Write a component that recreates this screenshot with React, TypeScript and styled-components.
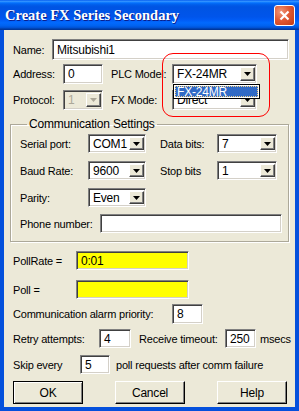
import { type ReactElement, type ReactNode } from 'react';
import styled, { createGlobalStyle } from 'styled-components';

const GlobalStyle = createGlobalStyle`
  html, body {
    margin: 0;
    padding: 0;
    background: #ffffff;
  }
  body {
    font-family: 'Liberation Sans', Arial, sans-serif;
    font-size: 11px;
    letter-spacing: -0.2px;
    color: #000;
  }
`;

const Window = styled.div`
  position: relative;
  width: 299px;
  height: 411px;
  display: flex;
  flex-direction: column;
  background: #0450dc;
  box-sizing: border-box;
  overflow: hidden;
`;

const TitleBar = styled.div`
  height: 30px;
  flex: none;
  display: flex;
  align-items: center;
  justify-content: space-between;
  padding: 0 4px 0 5px;
  box-sizing: border-box;
  background: linear-gradient(
    to bottom,
    #0058ee 0%,
    #3593ff 4%,
    #288eff 6%,
    #127dff 8%,
    #036ffc 10%,
    #0262ee 14%,
    #0057e5 20%,
    #0054e3 24%,
    #0055eb 56%,
    #005bf5 66%,
    #026afe 76%,
    #0062ef 86%,
    #0052d6 92%,
    #0040ab 96%,
    #003092 100%
  );
`;

const Title = styled.span`
  font-family: 'Liberation Serif', 'Times New Roman', serif;
  font-weight: bold;
  font-size: 14.5px;
  letter-spacing: 0;
  color: #fff;
  text-shadow: 1px 1px 0 #0a1e8c;
`;

const CloseButton = styled.div`
  width: 21px;
  height: 21px;
  box-sizing: border-box;
  border: 1px solid #fff;
  border-radius: 3px;
  background: radial-gradient(circle at 30% 30%, #f0977a 0%, #e05a35 45%, #c13a12 100%);
  display: flex;
  align-items: center;
  justify-content: center;
`;

const Body = styled.div`
  flex: 1;
  margin: 0 4px 4px 4px;
  background: #ece9d8;
  padding: 9px 6px 0 6px;
  display: flex;
  flex-direction: column;
`;

const Row = styled.div<{ $h: number; $mt?: number }>`
  display: flex;
  align-items: center;
  height: ${(p) => p.$h}px;
  margin-top: ${(p) => p.$mt ?? 0}px;
  padding-left: 3px;
  flex: none;
`;

const GroupRow = styled(Row)`
  padding-left: 0;
`;

const Label = styled.span<{ $w?: number; $ml?: number }>`
  width: ${(p) => (p.$w ? `${p.$w}px` : 'auto')};
  margin-left: ${(p) => p.$ml ?? 0}px;
  flex: none;
  white-space: nowrap;
`;

const Field = styled.div<{ $w?: number; $bg?: string }>`
  width: ${(p) => (p.$w ? `${p.$w}px` : 'auto')};
  flex: ${(p) => (p.$w ? 'none' : '1')};
  height: 100%;
  box-sizing: border-box;
  background: ${(p) => p.$bg ?? '#fff'};
  border-top: 1px solid #808080;
  border-left: 1px solid #808080;
  border-right: 1px solid #fff;
  border-bottom: 1px solid #fff;
  box-shadow: inset 1px 1px 0 #404040, inset -1px -1px 0 #d4d0c8;
  display: flex;
  align-items: center;
  padding-left: 4px;
  font-size: 12px;
`;

const ComboBox = styled.div<{ $w: number; $disabled?: boolean }>`
  position: relative;
  width: ${(p) => p.$w}px;
  height: 100%;
  flex: none;
  box-sizing: border-box;
  background: ${(p) => (p.$disabled ? '#ece9d8' : '#fff')};
  border-top: 1px solid #808080;
  border-left: 1px solid #808080;
  border-right: 1px solid #fff;
  border-bottom: 1px solid #fff;
  box-shadow: inset 1px 1px 0 #404040, inset -1px -1px 0 #d4d0c8;
  display: flex;
  align-items: center;
  padding: 2px 1px 2px 1px;
  color: ${(p) => (p.$disabled ? '#aca899' : '#000')};
  font-size: 12px;
`;

const ComboText = styled.span`
  flex: 1;
  min-width: 0;
  padding-left: 3px;
  white-space: nowrap;
`;

const DropButton = styled.div`
  width: 15px;
  height: 100%;
  flex: none;
  box-sizing: border-box;
  background: #ece9d8;
  border-top: 1px solid #fff;
  border-left: 1px solid #fff;
  border-right: 1px solid #404040;
  border-bottom: 1px solid #404040;
  box-shadow: inset -1px -1px 0 #808080;
  display: flex;
  align-items: center;
  justify-content: center;
`;

const DropList = styled.div`
  position: absolute;
  left: 0;
  top: calc(100% + 1px);
  width: 87px;
  height: 15px;
  box-sizing: border-box;
  border: 1px solid #000;
  background: #fff;
  padding: 1px;
  z-index: 2;
`;

const DropItem = styled.div`
  height: 100%;
  box-sizing: border-box;
  background: #316ac5;
  color: #fff;
  outline: 1px dotted #f5d080;
  outline-offset: -1px;
  display: flex;
  align-items: center;
  padding-left: 2px;
  font-size: 12px;
`;

const Highlight = styled.div`
  position: absolute;
  left: 162px;
  top: 53px;
  width: 108px;
  height: 64px;
  box-sizing: border-box;
  border: 1px solid #ff0000;
  border-radius: 11px;
  pointer-events: none;
  z-index: 3;
`;

const Group = styled.fieldset`
  margin: 7px 0 0 0;
  padding: 0 0 8px 9px;
  min-width: 0;
  border: 1px solid #aca899;
  box-shadow: inset 1px 1px 0 #fff, 1px 1px 0 #fff;
  flex: none;
`;

const Legend = styled.legend`
  margin-left: 7px;
  padding: 0 2px;
  line-height: 14px;
  font-size: 12px;
`;

const ButtonRow = styled.div`
  display: flex;
  gap: 32px;
  padding-left: 3px;
  margin-top: 7px;
  height: 23px;
`;

const Button = styled.div<{ $default?: boolean }>`
  width: 70px;
  height: 23px;
  box-sizing: border-box;
  background: #ece9d8;
  display: flex;
  align-items: center;
  justify-content: center;
  font-size: 12px;
  border-top: 1px solid ${(p) => (p.$default ? '#000' : '#fff')};
  border-left: 1px solid ${(p) => (p.$default ? '#000' : '#fff')};
  border-right: 1px solid #000;
  border-bottom: 1px solid #000;
  box-shadow: ${(p) =>
    p.$default
      ? 'inset 1px 1px 0 #fff, inset -1px -1px 0 #808080'
      : 'inset -1px -1px 0 #808080'};
`;

function Arrow({ color = '#000' }: { color?: string }): ReactElement {
  return (
    <svg width='7' height='4' viewBox='0 0 7 4'>
      <path d='M0 0H7L3.5 4Z' fill={color} />
    </svg>
  );
}

function Combo({
  value,
  width,
  disabled,
  children,
}: {
  value: string;
  width: number;
  disabled?: boolean;
  children?: ReactNode;
}): ReactElement {
  return (
    <ComboBox $w={width} $disabled={disabled}>
      <ComboText>{value}</ComboText>
      <DropButton>
        <Arrow color={disabled ? '#aca899' : '#000'} />
      </DropButton>
      {children}
    </ComboBox>
  );
}

function App(): ReactElement {
  return (
    <Window>
      <GlobalStyle />
      <TitleBar>
        <Title>Create FX Series Secondary</Title>
        <CloseButton>
          <svg width='11' height='11' viewBox='0 0 11 11'>
            <path d='M1.5 1.5L9.5 9.5M9.5 1.5L1.5 9.5' stroke='#fff' strokeWidth='2.2' />
          </svg>
        </CloseButton>
      </TitleBar>
      <Body>
        <Row $h={21}>
          <Label $w={39}>Name:</Label>
          <Field>Mitsubishi1</Field>
        </Row>
        <Row $h={20} $mt={4}>
          <Label $w={50}>Address:</Label>
          <Field $w={40}>0</Field>
          <Label $w={61} $ml={8}>
            PLC Model:
          </Label>
          <Combo value='FX-24MR' width={85}>
            <DropList>
              <DropItem>FX-24MR</DropItem>
            </DropList>
          </Combo>
        </Row>
        <Row $h={20} $mt={6}>
          <Label $w={50}>Protocol:</Label>
          <Combo value='1' width={40} disabled />
          <Label $w={61} $ml={8}>
            FX Mode:
          </Label>
          <Combo value='Direct' width={85} />
        </Row>
        <Group>
          <Legend>Communication Settings</Legend>
          <GroupRow $h={19} $mt={3}>
            <Label $w={68}>Serial port:</Label>
            <Combo value='COM1' width={58} />
            <Label $w={57} $ml={14}>
              Data bits:
            </Label>
            <Combo value='7' width={60} />
          </GroupRow>
          <GroupRow $h={19} $mt={8}>
            <Label $w={68}>Baud Rate:</Label>
            <Combo value='9600' width={58} />
            <Label $w={57} $ml={14}>
              Stop bits
            </Label>
            <Combo value='1' width={60} />
          </GroupRow>
          <GroupRow $h={19} $mt={8}>
            <Label $w={68}>Parity:</Label>
            <Combo value='Even' width={58} />
          </GroupRow>
          <GroupRow $h={19} $mt={7}>
            <Label $w={80}>Phone number:</Label>
            <Field $w={182} />
          </GroupRow>
        </Group>
        <Row $h={19} $mt={9}>
          <Label $w={63}>PollRate =</Label>
          <Field $w={113} $bg='#ffff00'>
            0:01
          </Field>
        </Row>
        <Row $h={19} $mt={10}>
          <Label $w={63}>Poll =</Label>
          <Field $w={113} $bg='#ffff00' />
        </Row>
        <Row $h={20} $mt={5}>
          <Label $w={159}>Communication alarm priority:</Label>
          <Field $w={31}>8</Field>
        </Row>
        <Row $h={19} $mt={5}>
          <Label $w={86}>Retry attempts:</Label>
          <Field $w={32}>4</Field>
          <Label $w={86} $ml={8}>
            Receive timeout:
          </Label>
          <Field $w={31}>250</Field>
          <Label $ml={4}>msecs</Label>
        </Row>
        <Row $h={19} $mt={7}>
          <Label $w={67}>Skip every</Label>
          <Field $w={30}>5</Field>
          <Label $ml={6}>poll requests after comm failure</Label>
        </Row>
        <ButtonRow>
          <Button $default>OK</Button>
          <Button>Cancel</Button>
          <Button>Help</Button>
        </ButtonRow>
      </Body>
      <Highlight />
    </Window>
  );
}

export default App;
